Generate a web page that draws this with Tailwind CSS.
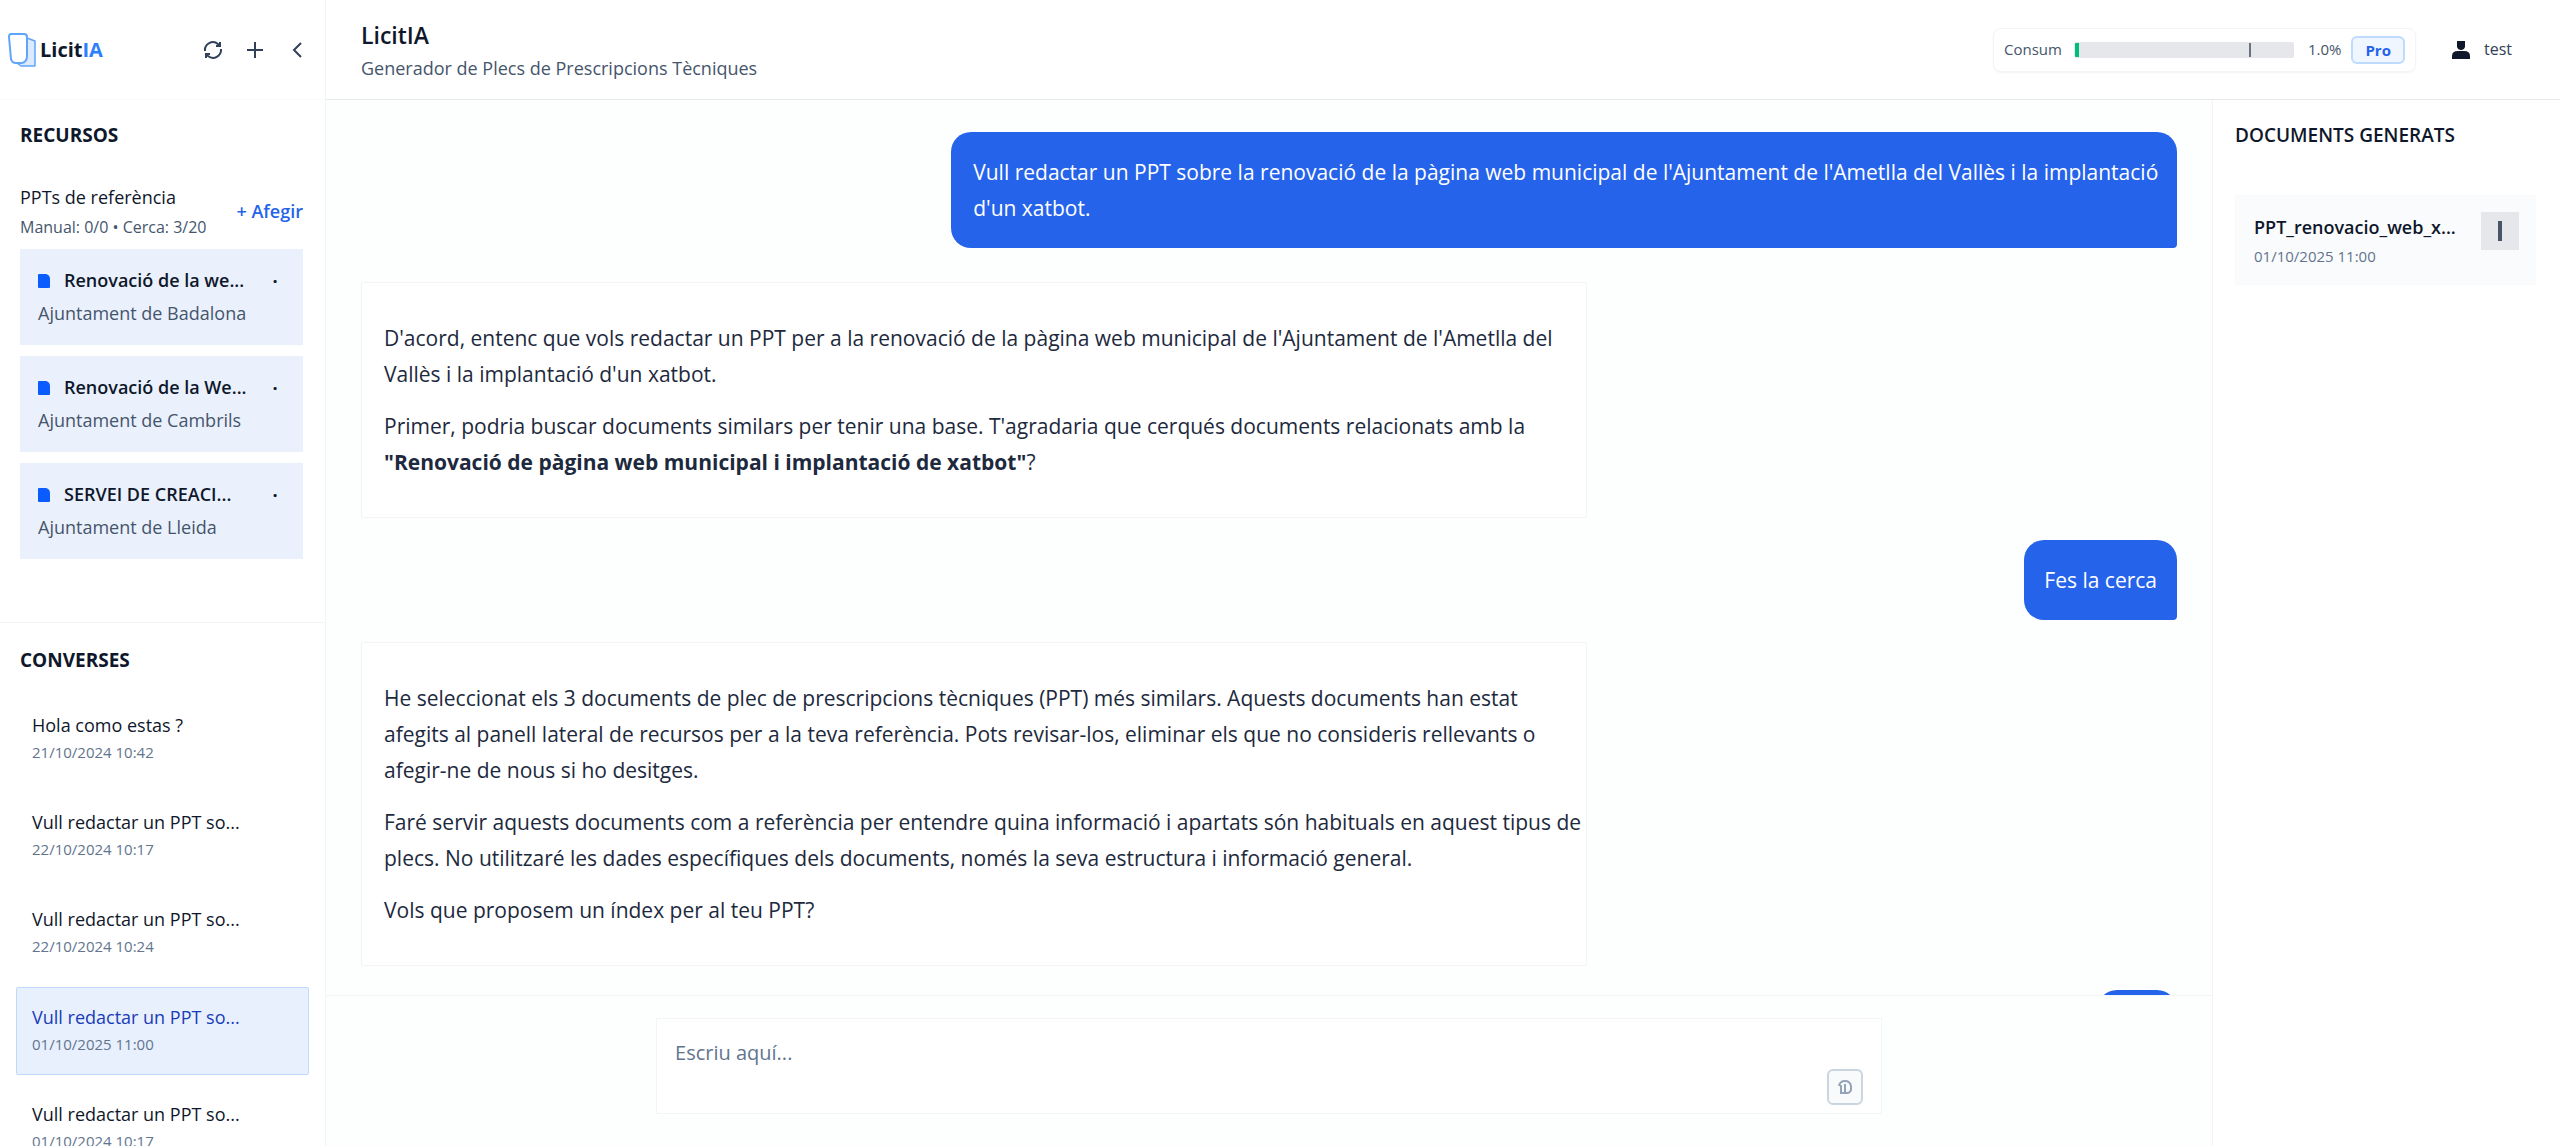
<!DOCTYPE html>
<html lang="ca">
    <head>
        <meta charset="UTF-8">
        <meta name="viewport" content="width=device-width,initial-scale=1.0">
        <title>LicitIA</title>
        <script src="https://cdn.jsdelivr.net/npm/@tailwindcss/browser@4"></script>
    </head>
    <body class="h-screen flex overflow-hidden bg-white text-slate-900 text-[18px] leading-[27px] font-['Open_Sans','Noto_Sans',sans-serif]">

        <!-- Left sidebar -->
        <aside class="w-[326px] shrink-0 h-full flex flex-col border-r border-gray-100 overflow-hidden">
            <div class="h-[100px] shrink-0 flex items-center pl-2 pr-[22px] border-b border-gray-50">
                <svg class="w-7 h-9" viewBox="0 0 28 36" fill="none" stroke="#60a5fa" stroke-width="2" stroke-linejoin="round">
                    <path d="M19 6l8 3v25H13l-4-3" fill="#dbeafe" stroke-width="1.5"/>
                    <path d="M3 2h13q3 0 3 3v19q0 6-5 7H8q-4 0-5-4L1 5q0-3 2-3z" fill="#fff"/>
                </svg>
                <span class="ml-1 text-[20px] font-bold">Licit<span class="text-blue-500">IA</span></span>
                <div class="ml-auto flex items-center gap-6 text-slate-700">
                    <button aria-label="Actualitza">
                        <svg class="w-5 h-5" viewBox="0 0 20 20" fill="none" stroke="currentColor" stroke-width="2">
                            <path d="M2 11a8 8 0 0 1 13-7l2 2M18 9a8 8 0 0 1-13 7l-2-2"/>
                            <path d="M17 2v4h-4M3 18v-4h4"/>
                        </svg>
                    </button>
                    <button aria-label="Nova conversa">
                        <svg class="w-4 h-4" viewBox="0 0 16 16" stroke="currentColor" stroke-width="2"><path d="M8 0v16M0 8h16"/></svg>
                    </button>
                    <button class="ml-1" aria-label="Amaga">
                        <svg class="w-3 h-4" viewBox="0 0 12 16" fill="none" stroke="currentColor" stroke-width="2"><path d="M10 1L3 8l7 7"/></svg>
                    </button>
                </div>
            </div>

            <section class="h-[523px] shrink-0 pl-5 pr-[22px] pt-[22px] border-b border-gray-100">
                <h2 class="text-[19px] font-bold">RECURSOS</h2>
                <div class="flex items-center justify-between mt-8 mb-2">
                    <div>
                        <h3 class="font-medium leading-[33px]">PPTs de referència</h3>
                        <p class="text-[16px] text-slate-600">Manual: 0/0 • Cerca: 3/20</p>
                    </div>
                    <button class="font-semibold text-[#2563eb]">+ Afegir</button>
                </div>
                <div class="flex flex-col gap-[11px]">
                    <article class="h-24 bg-[#eaf1fc] pt-[18px] px-[18px]">
                        <div class="flex items-center">
                            <svg class="w-3 h-3.5 mr-3.5" viewBox="0 0 12 14" fill="#0b5cff"><path d="M1 0h7q4 1 4 5v8q0 1-1 1H1q-1 0-1-1V1q0-1 1-1z"/></svg>
                            <h4 class="font-semibold">Renovació de la we...</h4>
                            <button class="ml-auto w-5 leading-none font-bold" aria-label="Treu">·</button>
                        </div>
                        <p class="mt-1.5 text-slate-600">Ajuntament de Badalona</p>
                    </article>
                    <article class="h-24 bg-[#eaf1fc] pt-[18px] px-[18px]">
                        <div class="flex items-center">
                            <svg class="w-3 h-3.5 mr-3.5" viewBox="0 0 12 14" fill="#0b5cff"><path d="M1 0h7q4 1 4 5v8q0 1-1 1H1q-1 0-1-1V1q0-1 1-1z"/></svg>
                            <h4 class="font-semibold">Renovació de la We...</h4>
                            <button class="ml-auto w-5 leading-none font-bold" aria-label="Treu">·</button>
                        </div>
                        <p class="mt-1.5 text-slate-600">Ajuntament de Cambrils</p>
                    </article>
                    <article class="h-24 bg-[#eaf1fc] pt-[18px] px-[18px]">
                        <div class="flex items-center">
                            <svg class="w-3 h-3.5 mr-3.5" viewBox="0 0 12 14" fill="#0b5cff"><path d="M1 0h7q4 1 4 5v8q0 1-1 1H1q-1 0-1-1V1q0-1 1-1z"/></svg>
                            <h4 class="font-semibold">SERVEI DE CREACI...</h4>
                            <button class="ml-auto w-5 leading-none font-bold" aria-label="Treu">·</button>
                        </div>
                        <p class="mt-1.5 text-slate-600">Ajuntament de Lleida</p>
                    </article>
                </div>
            </section>

            <section class="flex-1 min-h-0 pt-6 pl-4 pr-4 overflow-hidden">
                <h2 class="ml-1 mb-[22px] text-[19px] font-bold">CONVERSES</h2>
                <div class="flex flex-col gap-2.5">
                    <a href="#" class="block h-[87px] px-4 pt-4">
                        <span class="block font-medium">Hola como estas ?</span>
                        <span class="block text-[15px] text-slate-500">21/10/2024 10:42</span>
                    </a>
                    <a href="#" class="block h-[87px] px-4 pt-4">
                        <span class="block font-medium">Vull redactar un PPT so...</span>
                        <span class="block text-[15px] text-slate-500">22/10/2024 10:17</span>
                    </a>
                    <a href="#" class="block h-[87px] px-4 pt-4">
                        <span class="block font-medium">Vull redactar un PPT so...</span>
                        <span class="block text-[15px] text-slate-500">22/10/2024 10:24</span>
                    </a>
                    <a href="#" class="block h-[88px] px-[15px] pt-4 border border-blue-200 rounded-xs bg-[#e8f0fd]">
                        <span class="block font-medium text-blue-800">Vull redactar un PPT so...</span>
                        <span class="block text-[15px] text-slate-500">01/10/2025 11:00</span>
                    </a>
                    <a href="#" class="block h-[87px] px-4 pt-4">
                        <span class="block font-medium">Vull redactar un PPT so...</span>
                        <span class="block text-[15px] text-slate-500">01/10/2024 10:17</span>
                    </a>
                </div>
            </section>
        </aside>

        <div class="flex-1 min-w-0 flex flex-col">
            <!-- Top bar -->
            <header class="h-[100px] shrink-0 flex items-center justify-between pl-[35px] pr-12 border-b border-gray-200">
                <div class="pt-1">
                    <h1 class="text-[23px] leading-[33px] font-semibold">LicitIA</h1>
                    <p class="leading-[33px] text-slate-600">Generador de Plecs de Prescripcions Tècniques</p>
                </div>
                <div class="flex items-center">
                    <div class="flex items-center h-11 pl-2.5 pr-2.5 rounded-lg border border-gray-100 shadow-xs text-[15px]">
                        <span class="text-slate-600">Consum</span>
                        <div class="relative ml-3 w-[220px] h-4 rounded-xs border border-gray-200 bg-gray-200 overflow-hidden">
                            <div class="h-full bg-emerald-500" style="width:2%"></div>
                            <div class="absolute top-0 left-[80%] w-0.5 h-full bg-gray-500"></div>
                        </div>
                        <span class="ml-3.5 text-slate-600">1.0%</span>
                        <span class="ml-2.5 px-3 rounded-md border-2 border-blue-200 bg-blue-50 leading-6 font-bold text-[#2563eb]">Pro</span>
                    </div>
                    <button class="flex items-center gap-3.5 ml-9 text-[16px] text-slate-700">
                        <svg class="w-[18px] h-[18px]" viewBox="0 0 18 18" fill="#0f172a"><path d="M5 0h8v6q-1 3-4 3T5 6zM0 18v-3q0-5 6-5h6q6 0 6 5v3z"/></svg>
                        test
                    </button>
                </div>
            </header>

            <div class="flex-1 min-h-0 flex">
                <!-- Conversation -->
                <main class="flex-1 min-w-0 flex flex-col bg-[#fdfefe]">
                    <div class="flex-1 min-h-0 overflow-hidden flex flex-col px-[35px] pt-8 gap-[22px] text-[21px] leading-9 text-slate-800">
                        <div class="self-end shrink-0 max-w-[67.5%] mb-3 py-[22px] pl-[22px] pr-4 rounded-[20px] rounded-br-sm bg-[#2563eb] text-white">Vull redactar un PPT sobre la renovació de la pàgina web municipal de l'Ajuntament de l'Ametlla del Vallès i la implantació d'un xatbot.</div>

                        <div class="self-start shrink-0 max-w-[67.5%] py-[21px] pl-[22px] pr-1 rounded-xs border border-gray-100 bg-white">
                            <p class="my-4">D'acord, entenc que vols redactar un PPT per a la renovació de la pàgina web municipal de l'Ajuntament de l'Ametlla del Vallès i la implantació d'un xatbot.</p>
                            <p class="my-4">Primer, podria buscar documents similars per tenir una base. T'agradaria que cerqués documents relacionats amb la <strong>"Renovació de pàgina web municipal i implantació de xatbot"</strong>?</p>
                        </div>

                        <div class="self-end shrink-0 py-[22px] px-5 rounded-[20px] rounded-br-sm bg-[#2563eb] text-white">Fes la cerca</div>

                        <div class="self-start shrink-0 max-w-[67.5%] py-[21px] pl-[22px] pr-1 rounded-xs border border-gray-100 bg-white">
                            <p class="my-4">He seleccionat els 3 documents de plec de prescripcions tècniques (PPT) més similars. Aquests documents han estat afegits al panell lateral de recursos per a la teva referència. Pots revisar-los, eliminar els que no consideris rellevants o afegir-ne de nous si ho desitges.</p>
                            <p class="my-4">Faré servir aquests documents com a referència per entendre quina informació i apartats són habituals en aquest tipus de plecs. No utilitzaré les dades específiques dels documents, només la seva estructura i informació general.</p>
                            <p class="my-4">Vols que proposem un índex per al teu PPT?</p>
                        </div>

                        <div class="self-end shrink-0 w-20 h-20 mt-0.5 rounded-[20px] rounded-br-sm bg-[#2563eb]"></div>
                    </div>

                    <form class="shrink-0 pt-[22px] pb-8 border-t border-gray-100">
                        <div class="flex items-end w-[65%] h-24 mx-auto pl-[18px] pr-[18px] pb-2 border border-gray-100 bg-white">
                            <textarea aria-label="Missatge" placeholder="Escriu aquí..." class="flex-1 h-[76px] py-1.5 text-[20px] leading-9 resize-none outline-none placeholder:text-slate-500"></textarea>
                            <button class="w-9 h-9 flex items-center justify-center rounded-md border-2 border-slate-300 bg-slate-50" aria-label="Envia">
                                <svg class="w-4 h-4" viewBox="0 0 16 16" fill="none" stroke="#94a3b8" stroke-width="2"><path d="M2 7q1-5 6-5t6 5v4q-1 3-4 3H4V6M8 5v9"/></svg>
                            </button>
                        </div>
                    </form>
                </main>

                <!-- Generated documents -->
                <aside class="w-[348px] shrink-0 pl-[22px] pr-6 pt-[22px] border-l border-gray-100">
                    <h2 class="text-[19px] font-semibold">DOCUMENTS GENERATS</h2>
                    <article class="flex items-start justify-between h-[90px] mt-[46px] pt-4 pl-[18px] pr-4 border border-gray-50 bg-[#fafbfc]">
                        <div>
                            <h3 class="font-semibold leading-[31px]">PPT_renovacio_web_x...</h3>
                            <p class="text-[15px] text-slate-500">01/10/2025 11:00</p>
                        </div>
                        <button class="w-[38px] h-[38px] shrink-0 flex items-center justify-center bg-gray-200" aria-label="Opcions">
                            <svg class="w-1 h-5" viewBox="0 0 4 20"><rect width="4" height="20" fill="#475569"/></svg>
                        </button>
                    </article>
                </aside>
            </div>
        </div>
    </body>
</html>
